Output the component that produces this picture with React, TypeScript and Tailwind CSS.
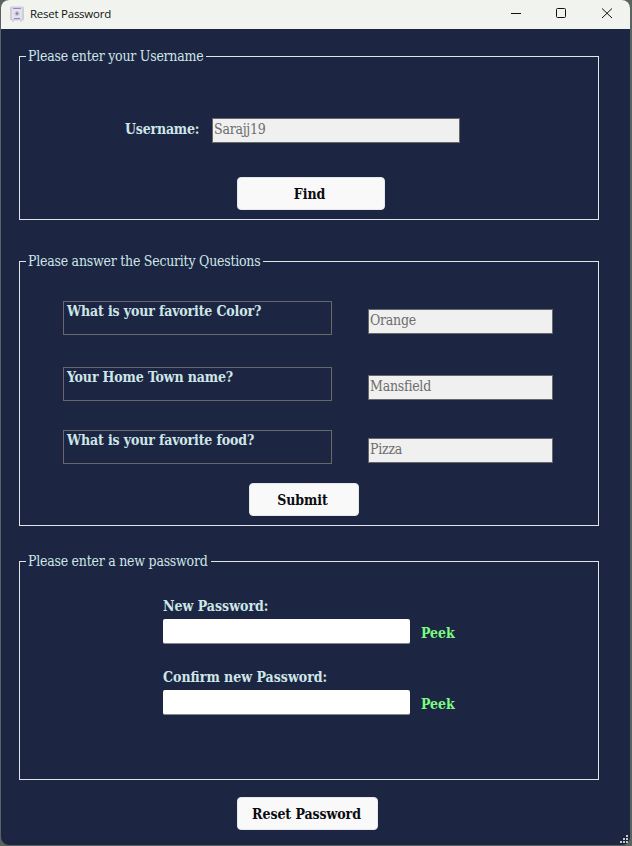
import type { ReactNode } from "react";

const serif = "font-['DejaVu_Serif_Condensed','DejaVu_Serif',serif]";

function Group({ title, className, children }: { title: string; className: string; children: ReactNode }) {
  return (
    <section className={`ml-[18px] flex w-[580px] flex-col border border-[#e2e4e6] ${className}`}>
      <h2 className="-mt-[10px] ml-[6px] h-[19px] w-fit bg-[#1c2541] pr-[3px] pl-[2px] text-[14px] leading-[19px] tracking-[-0.25px] whitespace-nowrap text-[#cde6e8]">
        {title}
      </h2>
      {children}
    </section>
  );
}

function DisabledField({ value, className }: { value: string; className: string }) {
  return (
    <div className={`h-[25px] border border-[#686868] bg-[#f0f0f0] pl-px text-[14px] leading-[21px] tracking-[-0.25px] text-[#6d6d6d] ${className}`}>
      {value}
    </div>
  );
}

function PushButton({ label, className }: { label: string; className: string }) {
  return (
    <button className={`block h-[33px] rounded-[4px] border border-[#e6e8ec] bg-[#f9f9f9] text-[14px] leading-[32px] font-bold tracking-[-0.08px] text-[#0b0b12] ${className}`}>
      {label}
    </button>
  );
}

function Question({ question, answer, className }: { question: string; answer: string; className: string }) {
  return (
    <div className={`ml-[43px] flex h-[34px] ${className}`}>
      <div className="w-[269px] border border-[#686868] pl-[3px] text-[14px] leading-[19px] font-bold tracking-[-0.15px] text-[#cde6e8]">
        {question}
      </div>
      <DisabledField value={answer} className="mt-[8px] ml-[36px] w-[185px]" />
    </div>
  );
}

function PasswordRow({ label, className }: { label: string; className: string }) {
  return (
    <div className={`ml-[143px] ${className}`}>
      <div className="h-[22px] text-[14px] leading-[18px] font-bold text-[#cde6e8]">{label}</div>
      <div className="flex">
        <div className="h-[25px] w-[247px] rounded-[2px] border-b border-[#868686] bg-white" />
        <span className="ml-[11px] text-[14px] leading-[28px] font-bold text-[#7dfa82]">Peek</span>
      </div>
    </div>
  );
}

export default function App() {
  return (
    <div className="h-[846px] w-[632px] overflow-hidden bg-[#59635f] pr-[2px] pb-px pl-px">
      <div className={`relative h-[845px] w-[629px] overflow-hidden rounded-[8px] bg-[#1c2541] ${serif}`}>
        <header className="flex h-[29px] items-center bg-[#f1f4ee] pb-[2px] font-['Open_Sans',sans-serif] text-[11.5px] text-[#111]">
          <svg className="ml-[8px] h-[16px] w-[16px]" viewBox="0 0 16 16">
            <rect x="1" y="0.5" width="14" height="14" rx="1.5" fill="#cfced3" />
            <rect x="3" y="2" width="10" height="11" fill="#e4e0ee" />
            <path d="M4 2.5h8M5 12.5h6" stroke="#9b7cf0" />
            <circle cx="8" cy="7.5" r="2.5" fill="#c9c8d0" />
            <circle cx="8" cy="7.5" r="1.2" fill="#83818c" />
            <path d="M3 15h2M11 15h2" stroke="#c4c4c8" />
          </svg>
          <span className="ml-[5px] flex-1 tracking-[-0.25px]">Reset Password</span>
          <svg className="mr-[17px] h-[11px] w-[102px]" viewBox="0 0 102 11" fill="none" stroke="#111">
            <path d="M0 5.5h10" />
            <rect x="45.5" y="0.5" width="9" height="9" rx="1" />
            <path d="M91 0.5l10 9.5M101 0.5l-10 9.5" />
          </svg>
        </header>

        <Group title="Please enter your Username" className="mt-[27px] h-[164px]">
          <div className="mt-[52px] flex">
            <span className="ml-[105px] w-[87px] text-[14px] leading-[22px] font-bold tracking-[-0.2px] text-[#cde6e8]">Username:</span>
            <DisabledField value="Sarajj19" className="w-[248px]" />
          </div>
          <PushButton label="Find" className="mt-[34px] ml-[217px] w-[148px] pr-[3px]" />
        </Group>

        <Group title="Please answer the Security Questions" className="mt-[41px] h-[265px]">
          <Question question="What is your favorite Color?" answer="Orange" className="mt-[30px]" />
          <Question question="Your Home Town name?" answer="Mansfield" className="mt-[32px]" />
          <Question question="What is your favorite food?" answer="Pizza" className="mt-[29px]" />
          <PushButton label="Submit" className="mt-[19px] ml-[229px] w-[110px] pr-[3px]" />
        </Group>

        <Group title="Please enter a new password" className="mt-[35px] h-[219px]">
          <PasswordRow label="New Password:" className="mt-[26px]" />
          <PasswordRow label="Confirm new Password:" className="mt-[21px]" />
        </Group>

        <PushButton label="Reset Password" className="mt-[17px] ml-[236px] w-[141px] pr-[2px]" />

        <svg className="absolute right-[2px] bottom-[2px] h-[8px] w-[8px]" viewBox="0 0 8 8" fill="#c8c8c8">
          <path d="M6 0h2v2h-2zM3 3h2v2h-2zM6 3h2v2h-2zM0 6h2v2h-2zM3 6h2v2h-2zM6 6h2v2h-2z" />
        </svg>
      </div>
    </div>
  );
}
